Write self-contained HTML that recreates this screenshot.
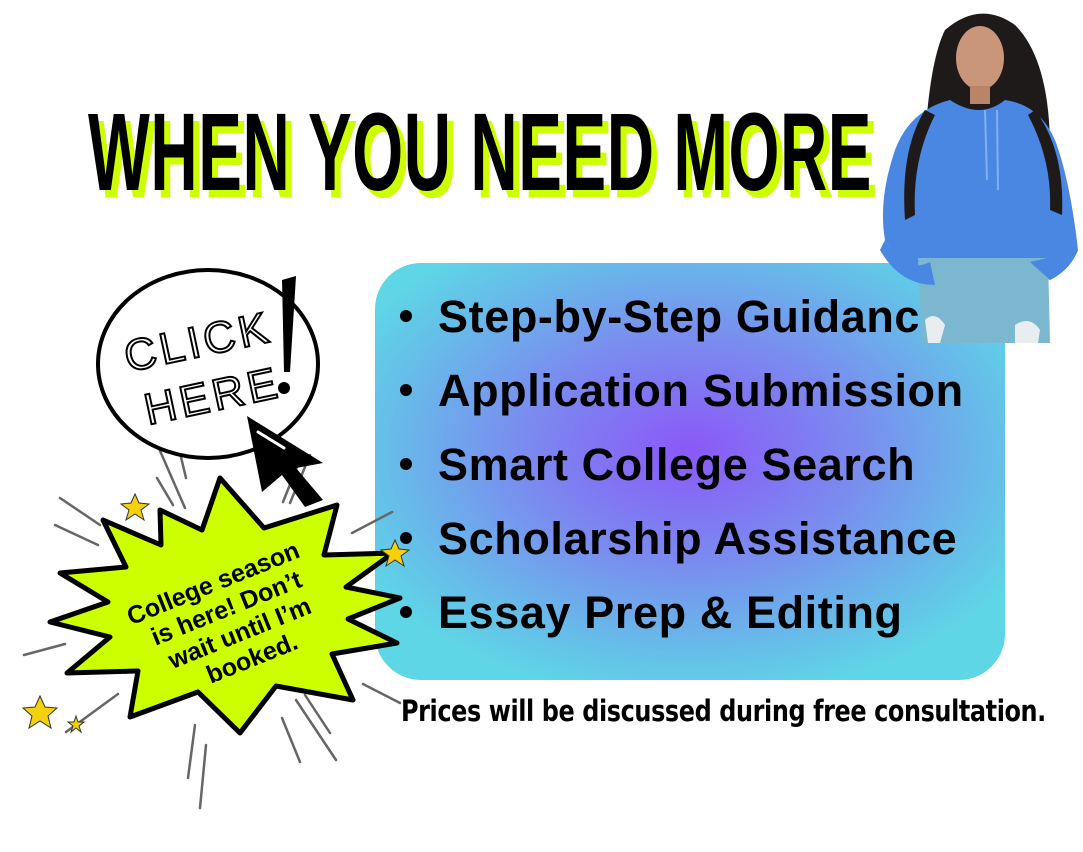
<!DOCTYPE html>
<html><head><meta charset="utf-8"><style>
html,body{margin:0;padding:0;background:#fff;}
body{width:1083px;height:852px;position:relative;overflow:hidden;font-family:"Liberation Sans",sans-serif;}
.h{position:absolute;left:88px;top:98px;font-weight:bold;font-size:110px;line-height:1;white-space:nowrap;transform-origin:0 0;transform:scaleX(0.595);letter-spacing:1px;}
.box{position:absolute;left:375px;top:263px;width:630px;height:417px;border-radius:46px;background:radial-gradient(ellipse 60% 60% at 50% 45%,#8b58f8 0%,#7a8cef 45%,#66bde9 80%,#5fd6e6 100%);}
.li{position:absolute;left:400px;font-weight:bold;font-size:45px;white-space:nowrap;color:#000;letter-spacing:0.6px;}
.li b{display:inline-block;width:12px;height:12px;border-radius:50%;background:#000;margin-right:26px;vertical-align:middle;position:relative;top:-4px;}
.foot{position:absolute;left:401px;top:694px;font-weight:bold;font-size:29px;white-space:nowrap;transform-origin:0 0;transform:scaleX(0.826);font-family:"DejaVu Sans","Liberation Sans",sans-serif;letter-spacing:-0.5px;}
</style></head><body>
<div class="h" style="left:94px;top:105px;color:#ccff00;">WHEN YOU NEED MORE</div>
<div class="h" style="color:#000;">WHEN YOU NEED MORE</div>
<div class="box"></div>
<svg style="position:absolute;left:0;top:0" width="1083" height="852">
 <g stroke="#666" stroke-width="2.5" stroke-linecap="round">
  <line x1="147" y1="421" x2="185" y2="508"/><line x1="176" y1="436" x2="186" y2="478"/>
  <line x1="157" y1="478" x2="173" y2="505"/>
  <line x1="60" y1="498" x2="100" y2="525"/><line x1="55" y1="525" x2="98" y2="545"/>
  <line x1="24" y1="655" x2="65" y2="644"/><line x1="66" y1="732" x2="118" y2="694"/>
  <line x1="188" y1="778" x2="195" y2="725"/><line x1="200" y1="808" x2="206" y2="745"/>
  <line x1="282" y1="718" x2="300" y2="762"/><line x1="296" y1="700" x2="336" y2="760"/>
  <line x1="305" y1="695" x2="330" y2="733"/>
  <line x1="352" y1="533" x2="392" y2="512"/><line x1="363" y1="684" x2="400" y2="703"/>
  <line x1="283" y1="502" x2="303" y2="452"/><line x1="290" y1="503" x2="310" y2="455"/>
 </g>
 <ellipse cx="208" cy="364" rx="110" ry="94" fill="#fff" stroke="#000" stroke-width="4"/>
 <text x="128" y="372" font-family="'Liberation Sans',sans-serif" font-size="44" transform="rotate(-12 128 372)" fill="none" stroke="#000" stroke-width="2" letter-spacing="4">CLICK</text>
 <text x="148" y="425" font-family="'Liberation Sans',sans-serif" font-size="44" transform="rotate(-12 148 425)" fill="none" stroke="#000" stroke-width="2" letter-spacing="4">HERE</text>
 <path d="M282 280 L296 276 L290 372 L284 372 Z" fill="#000"/><circle cx="284" cy="388" r="6" fill="#000"/>
 <path d="M247 416 L323 463 L296 468 L323 500 L305 507 L282 475 L262 492 Z" fill="#000"/>
 <path d="M258 432 L284 448" stroke="#fff" stroke-width="3" stroke-linecap="round"/>
 <path d="M220 478 L264 528 L337 505 L324 555 L393 553 L346 587 L400 598 L348 619 L397 643 L332 654 L353 700 L276 686 L240 733 L198 692 L130 717 L138 671 L67 673 L110 637 L50 622 L108 602 L60 573 L126 567 L103 520 L161 545 L160 510 L202 530 Z" fill="#ccff00" stroke="#000" stroke-width="5" stroke-linejoin="round"/>
 <g font-family="'Liberation Sans',sans-serif" font-weight="bold" font-size="25" text-anchor="middle" fill="#000" transform="rotate(-22 232 630)">
  <text x="232" y="588">College season</text>
  <text x="235" y="616">is here! Don’t</text>
  <text x="238" y="644">wait until I’m</text>
  <text x="240" y="672">booked.</text>
 </g>
 <g fill="#f5d10c" stroke="#333" stroke-width="1">
  <path d="M135 494 L139 503 L149 504 L141 510 L144 520 L135 514 L126 520 L129 510 L121 504 L131 503 Z"/>
  <path d="M395 540 L399 549 L409 550 L401 556 L404 566 L395 560 L386 566 L389 556 L381 550 L391 549 Z"/>
  <path d="M40 696 L45 707 L57 708 L48 716 L51 728 L40 721 L29 728 L32 716 L23 708 L35 707 Z"/>
  <path d="M76 716 L78 722 L84 722 L79 726 L81 732 L76 728 L71 732 L73 726 L68 722 L74 722 Z"/>
 </g>
 <!-- person -->
 <path d="M945 30 Q980 0 1015 25 Q1050 60 1050 150 Q1075 210 1070 240 L900 240 Q890 180 925 140 Q930 60 945 30 Z" fill="#1e1a1a"/>
 <path d="M950 100 Q980 120 1005 100 Q1040 105 1055 140 Q1070 180 1078 250 Q1070 270 1050 280 L1030 270 L1030 262 L935 262 L930 275 Q905 275 885 240 Q878 200 895 150 Q910 110 950 100 Z" fill="#4a87e3"/>
 <path d="M925 110 Q900 150 905 220 L915 215 Q912 160 935 115 Z M1035 110 Q1065 150 1062 215 L1050 210 Q1052 160 1028 115 Z" fill="#1e1a1a"/>
 <path d="M985 110 L987 180 M997 110 L998 190" stroke="#7fb0f0" stroke-width="2"/>
 <ellipse cx="980" cy="58" rx="24" ry="32" fill="#c9967a"/>
 <path d="M955 45 Q980 5 1005 45 Q1000 20 980 15 Q958 20 955 45 Z" fill="#1e1a1a"/>
 <rect x="970" y="86" width="20" height="18" fill="#b98468"/>
</svg>
<div class="li" style="top:291px"><b></b>Step-by-Step Guidance</div>
<div class="li" style="top:365px"><b></b>Application Submission</div>
<div class="li" style="top:439px"><b></b>Smart College Search</div>
<div class="li" style="top:513px"><b></b>Scholarship Assistance</div>
<div class="li" style="top:587px"><b></b>Essay Prep &amp; Editing</div>
<svg style="position:absolute;left:0;top:0" width="1083" height="852">
 <path d="M918 258 L1048 258 L1050 343 L922 343 Z" fill="#7bb7cf"/>
 <path d="M930 262 Q905 275 885 240 L880 250 Q900 285 935 285 Z M1030 262 L1050 280 Q1070 270 1078 250 L1060 255 Z" fill="#4a87e3"/>
 <path d="M925 320 Q935 310 945 325 L940 343 L928 343 Z M1015 325 Q1030 315 1040 330 L1038 343 L1015 343 Z" fill="#e8eef0"/>
</svg>
<div class="foot">Prices will be discussed during free consultation.</div>
</body></html>
